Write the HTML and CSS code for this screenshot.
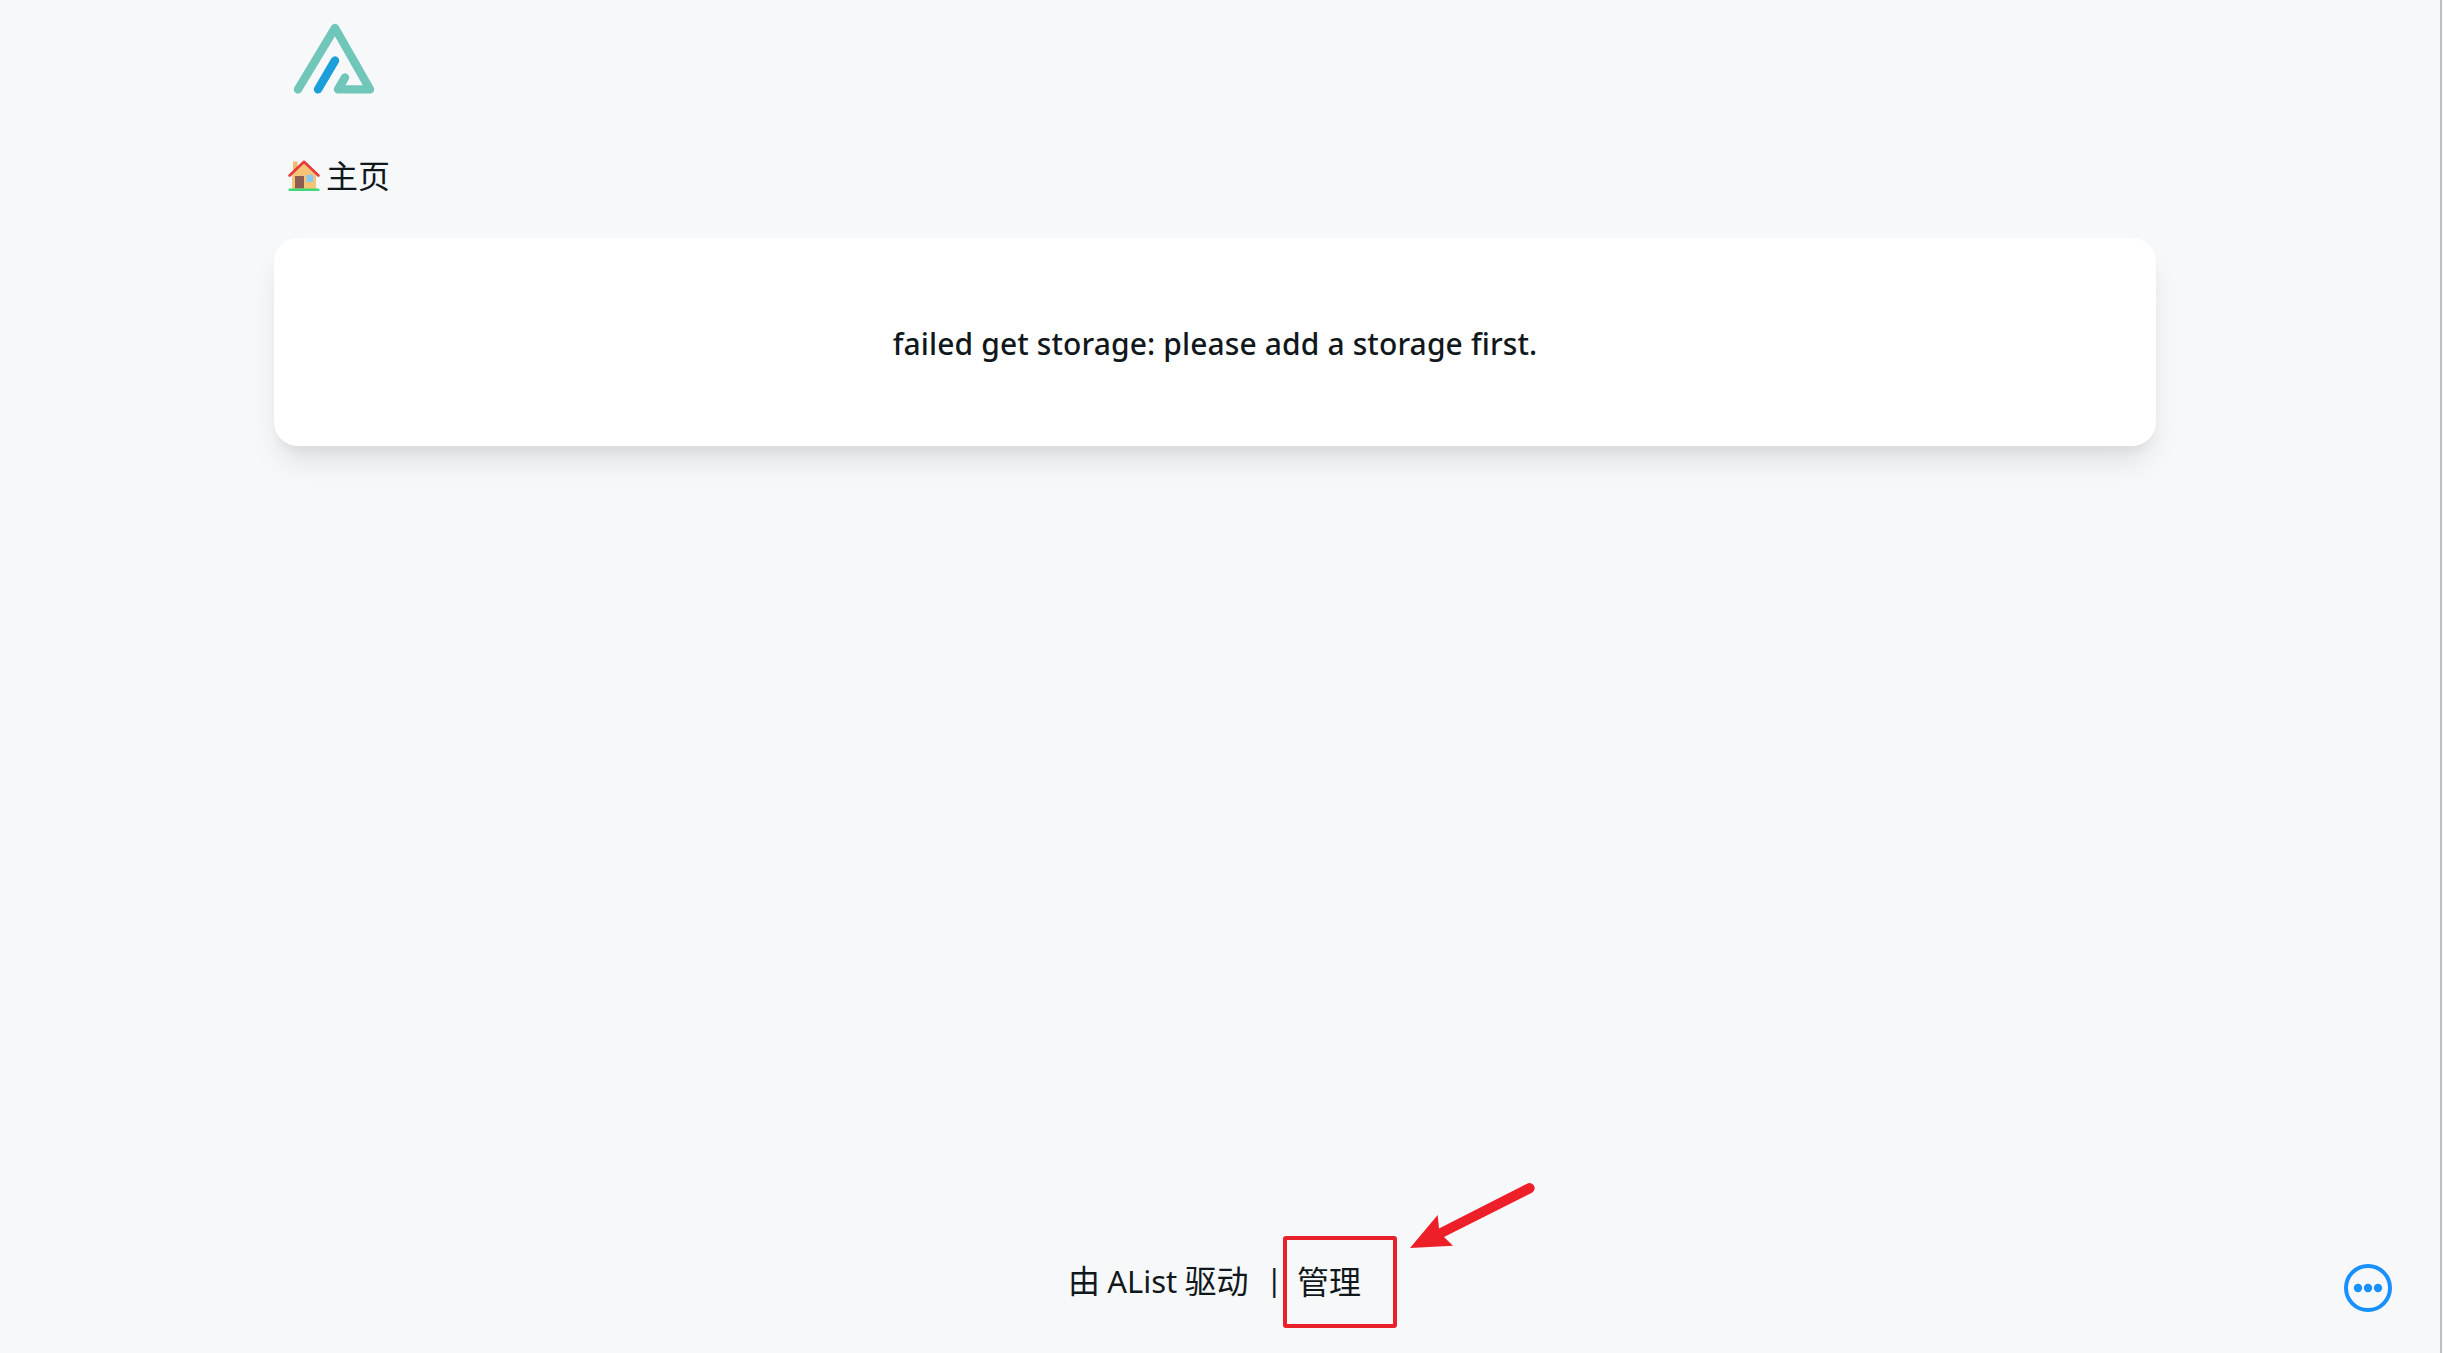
FILE: index.html
```html
<!DOCTYPE html>
<html lang="zh-CN">
<head>
<meta charset="utf-8">
<title>AList</title>
<link rel="stylesheet" href="styles.css">
</head>
<body>
<div class="page">
  <header class="header">
    <svg class="logo" viewBox="0 0 90 80" fill="none" stroke-linecap="round" stroke-linejoin="round" stroke-width="8.4">
      <path stroke="#70c6b9" d="M8 69.400 45 8 80 69.400H48L55 57.500"/>
      <path stroke="#1b9fdb" d="M28 69.300 45 40.500"/>
    </svg>
  </header>
  <nav class="breadcrumb">
    <svg class="house" viewBox="0 0 32 32">
      <path fill="#f1ba70" d="M5 1.5h4.500V15H5z"/>
      <path fill="#f6c477" d="M16 3 4 15v14.500h24V15z"/>
      <path fill="#8d5b50" d="M7 16h9v12.500H7z"/>
      <path fill="#84c9f8" d="M18.500 15h6.500v7h-6.500z"/>
      <path fill="none" stroke="#e53b3b" stroke-width="2.600" stroke-linecap="round" stroke-linejoin="round" d="M1.600 15.500 16 1.800 30.400 15.500"/>
      <path fill="none" stroke="#40d878" stroke-width="2.600" stroke-linecap="round" d="M1.700 29.700h28.600"/>
    </svg>
    <span class="crumb">主页</span>
  </nav>
  <main class="card"><h1 class="message">failed get storage: please add a storage first.</h1></main>
  <footer class="footer">
    <a class="powered">由 <span class="latin">AList</span> 驱动</a>
    <span class="divider">|</span>
    <a class="manage">管理</a>
  </footer>
</div>
<div class="highlight"></div>
<svg class="arrow" viewBox="0 0 130 72">
  <path fill="#ed1f29" d="M1 68 28.700 35 30 48.500 118 3.700a5 5 0 0 1 5 9L35 57 44 65.700z"/>
</svg>
<svg class="more" viewBox="0 0 48 48" fill="#1890ff">
  <circle cx="24" cy="24" r="22" fill="none" stroke="#1890ff" stroke-width="4"/>
  <circle cx="14" cy="24" r="4.200"/><circle cx="24" cy="24" r="4.200"/><circle cx="34" cy="24" r="4.200"/>
</svg>
<div class="edge"></div>
</body>
</html>
```
FILE: styles.css
```css
* { box-sizing: border-box; }
body {
  margin: 0;
  background: #f7f8fa;
  color: #11181c;
  font-family: "Noto Sans", "Noto Sans CJK SC", sans-serif;
}
.page {
  display: flex;
  flex-direction: column;
  width: 1882px;
  height: 1353px;
  margin-left: 274px;
}
.header { height: 128px; padding: 20px 0 0 16px; }
.logo { display: block; width: 90px; height: 80px; }
.breadcrumb {
  display: flex;
  align-items: center;
  height: 96px;
  padding-left: 14px;
}
.house { width: 32px; height: 32px; }
.crumb {
  margin-left: 6px;
  padding-bottom: 4px;
  font: 32px/48px "Noto Sans CJK SC", sans-serif;
}
.card {
  display: flex;
  align-items: center;
  justify-content: center;
  height: 208px;
  margin-top: 14px;
  border-radius: 24px;
  background: #fff;
  box-shadow: 0 20px 30px -6px rgba(0, 0, 0, .1), 0 8px 12px -4px rgba(0, 0, 0, .05);
}
.message {
  margin: 0;
  padding-top: 2px;
  font-size: 30px;
  font-weight: 500;
  letter-spacing: .12px;
  white-space: nowrap;
}
.footer {
  display: flex;
  align-items: center;
  height: 48px;
  margin: auto 0 49px 794px;
  font: 32px/48px "Noto Sans CJK SC", sans-serif;
  white-space: nowrap;
}
.latin { font-family: "Noto Sans", sans-serif; font-size: 31px; }
.powered { width: 198px; }
.divider { width: 31px; font: 30px/48px "Noto Sans", sans-serif; }
.highlight {
  position: absolute;
  left: 1283px;
  top: 1236px;
  width: 114px;
  height: 92px;
  border: 4px solid #e8212b;
  border-radius: 3px;
}
.arrow { position: absolute; left: 1409px; top: 1180px; width: 130px; height: 72px; }
.more { position: absolute; left: 2344px; top: 1264px; width: 48px; height: 48px; }
.edge { position: absolute; left: 2440px; top: 0; width: 2px; height: 1353px; background: #c0c0c0; }
```
